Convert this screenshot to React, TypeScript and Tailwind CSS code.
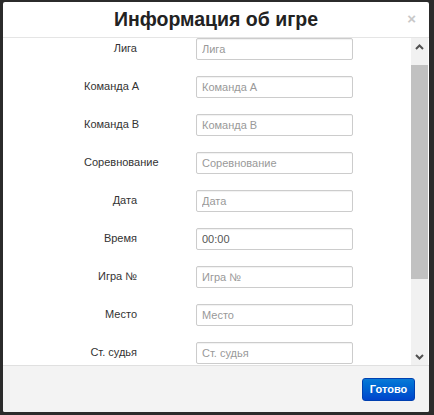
import React from "react";

const fields: { label: string; placeholder?: string; value?: string }[] = [
  { label: "Лига", placeholder: "Лига" },
  { label: "Команда А", placeholder: "Команда А" },
  { label: "Команда В", placeholder: "Команда В" },
  { label: "Соревнование", placeholder: "Соревнование" },
  { label: "Дата", placeholder: "Дата" },
  { label: "Время", value: "00:00" },
  { label: "Игра №", placeholder: "Игра №" },
  { label: "Место", placeholder: "Место" },
  { label: "Ст. судья", placeholder: "Ст. судья" },
];

function Chevron({ down }: { down?: boolean }) {
  return (
    <svg width="9" height="6" viewBox="0 0 9 6" className={down ? "rotate-180" : ""}>
      <path d="M1 5 L4.5 1.5 L8 5" fill="none" stroke="#505050" strokeWidth="2" />
    </svg>
  );
}

export default function App() {
  return (
    <div className="w-[434px] h-[415px] bg-[#2b2b2b] pt-[2px] pl-[3px] pr-[5px] pb-[3px] font-['Liberation_Sans',Arial,sans-serif]">
      <div className="flex flex-col h-full bg-white rounded-[2px] overflow-hidden">
        {/* header */}
        <div className="relative h-[36px] shrink-0 border-b border-[#e5e5e5] flex items-center justify-center">
          <h3 className="text-[19.5px] font-bold text-[#222] leading-none">Информация об игре</h3>
          <span className="absolute right-[13px] top-[9px] text-[15px] font-bold text-[#c8c8c8] leading-none">×</span>
        </div>

        {/* body */}
        <div className="flex flex-1 min-h-0">
          <div className="flex-1">
            {fields.map((f) => (
              <div key={f.label} className="flex items-center h-[22px] mb-[16px]">
                <div className="ml-[81px] w-[53px] text-right whitespace-nowrap text-[11px] text-[#333] -mt-[1px]">
                  {f.label}
                </div>
                <input
                  readOnly
                  placeholder={f.placeholder}
                  defaultValue={f.value}
                  className="ml-[59px] w-[157px] h-[22px] border border-[#ccc] rounded-[2px] px-[5px] text-[11px] text-[#555] placeholder:text-[#999] outline-none shadow-[inset_0_1px_1px_rgba(0,0,0,0.06)]"
                />
              </div>
            ))}
          </div>
          <div className="w-[17px] shrink-0 bg-[#f1f1f1] flex flex-col mr-[1px]">
            <div className="h-[17px] flex items-center justify-center">
              <Chevron />
            </div>
            <div className="h-[10px]" />
            <div className="h-[214px] bg-[#c1c1c1]" />
            <div className="flex-1" />
            <div className="h-[17px] flex items-center justify-center">
              <Chevron down />
            </div>
          </div>
        </div>

        {/* footer */}
        <div className="h-[47px] shrink-0 border-t border-[#e0e0e0] bg-[#f3f3f3] flex items-center justify-end pr-[14px]">
          <button className="w-[53px] h-[23px] rounded-[3px] bg-gradient-to-b from-[#0a7ad6] to-[#0044cc] border border-[#0040b0] text-white text-[11px] font-bold">
            Готово
          </button>
        </div>
      </div>
    </div>
  );
}
